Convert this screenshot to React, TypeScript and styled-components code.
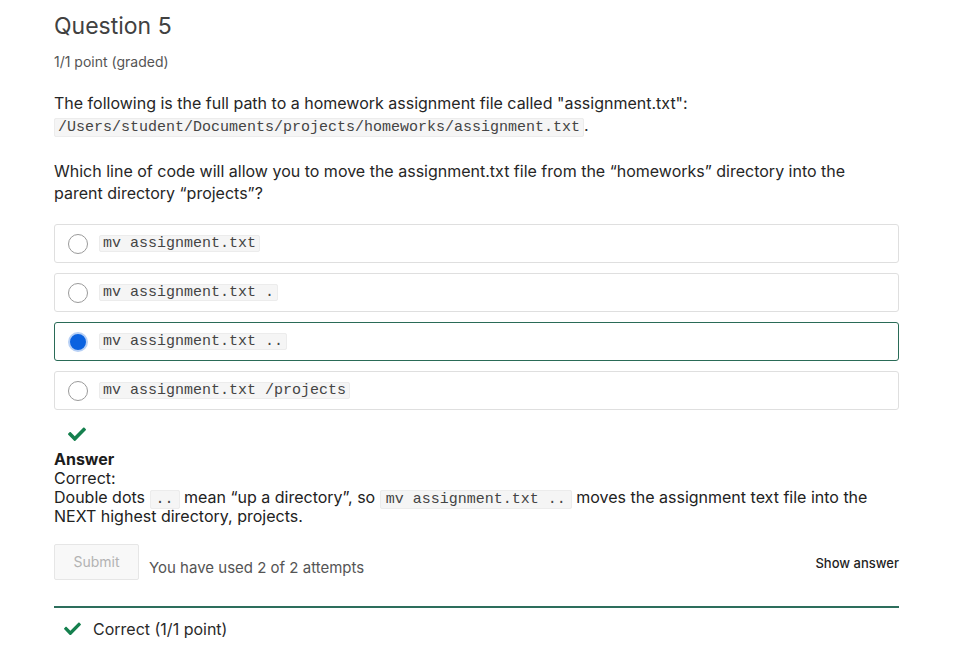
import React from "react";
import styled, { createGlobalStyle } from "styled-components";

const Global = createGlobalStyle`
  html, body { margin: 0; padding: 0; background: #fff; }
  body { font-family: Inter, "Noto Sans", sans-serif; color: #222; }
`;

const Page = styled.div`
  width: 845px;
  padding: 12px 0 0 54px;
`;

const Title = styled.h2`
  margin: 0;
  font-size: 23px;
  font-weight: 400;
  line-height: 28px;
  color: #414141;
`;

const Points = styled.div`
  margin-top: 13px;
  font-size: 14px;
  line-height: 17px;
  color: #555;
`;

const Para = styled.p<{ $top: number }>`
  margin: ${(p) => p.$top}px 0 0;
  padding-right: 8px;
  font-size: 16px;
  line-height: 22px;
  color: #262626;
`;

const Code = styled.code<{ $wide?: boolean }>`
  font-family: "Liberation Mono", "Courier New", monospace;
  font-size: 15px;
  line-height: 1;
  color: #444;
  background: #f5f5f5;
  border: 1px solid #ececec;
  border-radius: 2px;
  padding: 0 ${(p) => (p.$wide ? 5 : 3)}px;
`;

const Options = styled.div`
  margin-top: 20px;
  display: flex;
  flex-direction: column;
  gap: 10px;
`;

const Option = styled.label<{ $selected?: boolean }>`
  display: flex;
  align-items: center;
  gap: 11px;
  height: 39px;
  box-sizing: border-box;
  padding: 0 13px;
  border: 1px solid ${(p) => (p.$selected ? "#2a6b57" : "#dfdfdf")};
  border-radius: 3px;
`;

const Radio = styled.span<{ $checked?: boolean }>`
  width: 20px;
  height: 20px;
  box-sizing: border-box;
  border-radius: 50%;
  flex: none;
  border: ${(p) => (p.$checked ? "2px solid #b7d0f5" : "1px solid #9a9a9a")};
  background: ${(p) => (p.$checked ? "#0a62e0" : "#fff")};
`;

const Status = styled.div`
  margin: 16px 0 0 14px;
  height: 16px;
  display: flex;
  align-items: center;
`;

const Answer = styled.div`
  margin-top: 8px;
  font-size: 16px;
  line-height: 19px;
  color: #222;
`;

const AnswerTitle = styled.div`
  font-weight: 700;
  color: #1c1c1c;
`;

const Actions = styled.div`
  margin-top: 18px;
  display: flex;
  align-items: center;
`;

const SubmitButton = styled.button`
  width: 85px;
  height: 36px;
  box-sizing: border-box;
  background: #f8f8f8;
  border: 1px solid #e6e6e6;
  border-radius: 2px;
  color: #b3b3b3;
  font-family: Inter, sans-serif;
  font-size: 14px;
  padding: 0 0 2px;
`;

const Attempts = styled.span`
  margin: 10px 0 0 10px;
  font-size: 15px;
  color: #555;
`;

const ShowAnswer = styled.span`
  margin: 2px 0 0 auto;
  font-size: 13px;
  font-weight: 500;
  color: #1f1f1f;
`;

const Notification = styled.div`
  margin-top: 26px;
  border-top: 2px solid #2d6e5c;
  padding: 11px 0 0 10px;
  display: flex;
  align-items: center;
  gap: 12px;
  font-size: 16px;
  color: #2a2a2a;
`;

const Check = ({ size = 18 }: { size?: number }) => (
  <svg width={size} height={size * 0.78} viewBox="0 0 512 400" aria-hidden>
    <path
      fill="#15804e"
      d="M173.9 388.7 7.5 222.3c-10-10-10-26.2 0-36.2l36.2-36.2c10-10 26.2-10 36.2 0L192 262 432.1 21.9c10-10 26.2-10 36.2 0l36.2 36.2c10 10 10 26.2 0 36.2L210.1 388.7c-10 10-26.2 10-36.2 0z"
    />
  </svg>
);

const choices = [
  "mv assignment.txt",
  "mv assignment.txt .",
  "mv assignment.txt ..",
  "mv assignment.txt /projects",
];

export default function App() {
  return (
    <>
      <Global />
      <Page>
        <Title>Question 5</Title>
        <Points>1/1 point (graded)</Points>
        <Para $top={22}>
          The following is the full path to a homework assignment file called "assignment.txt":
          <br />
          <Code>/Users/student/Documents/projects/homeworks/assignment.txt</Code>.
        </Para>
        <Para $top={24}>
          Which line of code will allow you to move the assignment.txt file from the “homeworks” directory
          into the parent directory “projects”?
        </Para>
        <Options>
          {choices.map((c, i) => (
            <Option key={c} $selected={i === 2}>
              <Radio $checked={i === 2} />
              <Code>{c}</Code>
            </Option>
          ))}
        </Options>
        <Status>
          <Check />
        </Status>
        <Answer>
          <AnswerTitle>Answer</AnswerTitle>
          <div>Correct:</div>
          <div>
            Double dots <Code $wide>..</Code> mean “up a directory”, so <Code $wide>mv assignment.txt ..</Code>{" "}
            moves the assignment text file into the NEXT highest directory, projects.
          </div>
        </Answer>
        <Actions>
          <SubmitButton disabled>Submit</SubmitButton>
          <Attempts>You have used 2 of 2 attempts</Attempts>
          <ShowAnswer>Show answer</ShowAnswer>
        </Actions>
        <Notification>
          <Check size={17} />
          <span>Correct (1/1 point)</span>
        </Notification>
      </Page>
    </>
  );
}
